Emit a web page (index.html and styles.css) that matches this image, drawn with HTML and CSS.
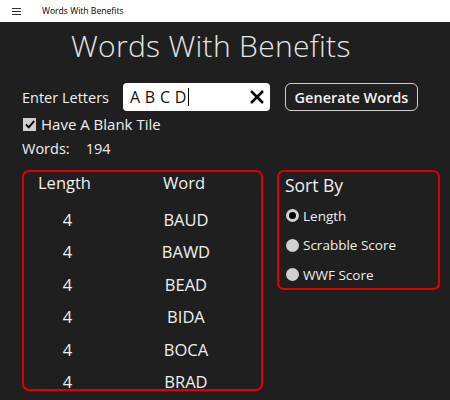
FILE: index.html
```html
<!DOCTYPE html>
<html>
<head>
<meta charset="utf-8">
<link rel="stylesheet" href="styles.css">
</head>
<body>
<header class="titlebar">
  <span class="hamburger"><span></span><span></span><span></span></span>
  <span class="apptitle">Words With Benefits</span>
</header>
<main class="page">
  <h1 class="title">Words With Benefits</h1>
  <div class="entry-row">
    <span class="label">Enter Letters</span>
    <div class="textbox">
      <span class="tb-text">A B C D</span><span class="caret"></span>
      <svg class="clear" width="16" height="16" viewBox="0 0 16 16"><path d="M2 2 L14 14 M14 2 L2 14" stroke="#000" stroke-width="2.6" stroke-linecap="butt"/></svg>
    </div>
    <button class="gen-btn">Generate Words</button>
  </div>
  <label class="check-row">
    <span class="checkbox"><svg width="12" height="12" viewBox="0 0 12 12"><path d="M2 6.5 L4.8 9.3 L10.2 2.8" fill="none" stroke="#000" stroke-width="1.8"/></svg></span>
    <span class="label">Have A Blank Tile</span>
  </label>
  <div class="count-row"><span class="label">Words:</span><span class="label">194</span></div>
  <div class="panels">
    <div class="panel list">
      <div class="list-head">
        <div class="hdr len">Length</div><div class="hdr word">Word</div>
      </div>
      <div class="list-row"><div class="cell num">4</div><div class="cell w">BAUD</div></div>
      <div class="list-row"><div class="cell num">4</div><div class="cell w">BAWD</div></div>
      <div class="list-row"><div class="cell num">4</div><div class="cell w">BEAD</div></div>
      <div class="list-row"><div class="cell num">4</div><div class="cell w">BIDA</div></div>
      <div class="list-row"><div class="cell num">4</div><div class="cell w">BOCA</div></div>
      <div class="list-row"><div class="cell num">4</div><div class="cell w">BRAD</div></div>
    </div>
    <div class="panel sort">
      <div class="sort-title">Sort By</div>
      <div class="radio-row"><span class="radio checked"></span><span>Length</span></div>
      <div class="radio-row"><span class="radio"></span><span>Scrabble Score</span></div>
      <div class="radio-row"><span class="radio"></span><span>WWF Score</span></div>
    </div>
  </div>
</main>
</body>
</html>
```
FILE: styles.css
```css
* { box-sizing: border-box; }
html, body { margin: 0; padding: 0; }
body {
  width: 450px; height: 400px; overflow: hidden;
  background: #1f1f1f;
  font-family: "Open Sans", "Noto Sans", sans-serif;
  color: #f0f0f0;
}
.titlebar {
  height: 22px; background: #fff; color: #000;
  display: flex; align-items: center;
}
.hamburger {
  width: 9px; margin-left: 12px; margin-right: 21px;
  display: flex; flex-direction: column; gap: 2px;
}
.hamburger span { display: block; height: 1px; background: #333; }
.apptitle { font-size: 8.6px; }
.page { padding: 0 0 0 22px; }
.title {
  margin: 6px 0 0 49px; font-weight: 300; font-size: 30px; line-height: 36px;
  color: #e6e6e6; letter-spacing: 0.3px;
}
.label { font-size: 14.5px; }
.entry-row { display: flex; align-items: center; margin-top: 18px; height: 30px; }
.entry-row .label { width: 101px; }
.textbox {
  width: 147px; height: 28px; background: #fff; border-radius: 4px;
  display: flex; align-items: center; padding-left: 7px; color: #111;
}
.tb-text { font-size: 16px; letter-spacing: 0.3px; }
.caret { width: 1px; height: 18px; background: #000; margin-left: 1px; }
.clear { margin-left: auto; margin-right: 5px; }
.gen-btn {
  margin-left: 15px; height: 28px; width: 133px;
  background: transparent; border: 1px solid #cfcfcf; border-radius: 6px;
  color: #f2f2f2; font-family: inherit; font-size: 14.5px; font-weight: 600; padding: 0;
}
.check-row { display: flex; align-items: center; gap: 5px; margin-top: 1px; height: 22px; }
.check-row .label { font-size: 15px; }
.checkbox {
  width: 13px; height: 13px; background: #cfcfcf; margin-left: 1px;
  display: flex; align-items: center; justify-content: center;
}
.count-row { display: flex; gap: 16px; margin-top: 3px; height: 20px; align-items: center; }
.panels { display: flex; gap: 14px; margin-top: 12px; align-items: flex-start; }
.panel { border: 2px solid #e00000; border-radius: 7px; }
.list { width: 241px; height: 221px; overflow: hidden; }
.list-head { display: flex; height: 31px; align-items: flex-start; }
.hdr { font-size: 16.5px; line-height: 22px; }
.len { padding-left: 14px; width: 139px; }
.list-row { display: flex; height: 32.5px; align-items: center; }
.cell { font-size: 16.5px; text-align: center; }
.num { width: 88px; }
.w { width: 152px; }
.sort { width: 163px; height: 120px; padding: 0 0 0 6px; }
.sort-title { font-size: 17.5px; height: 26px; line-height: 26px; margin-bottom: 3px; }
.radio-row { display: flex; align-items: center; gap: 4px; font-size: 13.5px; height: 29.5px; }
.radio {
  width: 13px; height: 13px; border-radius: 50%; background: #d0d0d0; margin-left: 1px;
}
.radio.checked { background: #000; border: 3px solid #d0d0d0; }
```
